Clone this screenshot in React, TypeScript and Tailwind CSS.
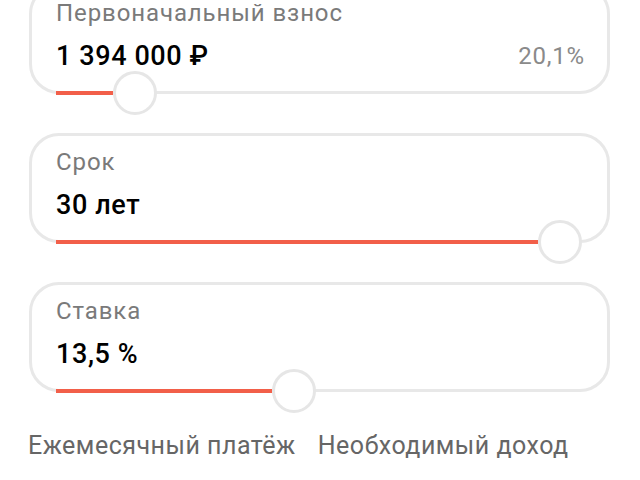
import React from 'react';

interface SliderCardProps {
  label: string;
  value: string;
  extra?: string;
  position: number; // 0..1
}

const TRACK_LEFT = 27;
const KNOB = 44;
const TRACK_WIDTH = 526;

const SliderCard: React.FC<SliderCardProps> = ({ label, value, extra, position }) => {
  const knobCenter = TRACK_LEFT + KNOB / 2 + position * (TRACK_WIDTH - KNOB);
  return (
    <div className="relative h-[110px] rounded-[30px] border-[3px] border-[#e8e8e8] bg-white pl-[24px] pr-[22px] pt-[12px]">
      <div className="text-[24px] leading-[28px] tracking-[0.9px] text-[#7a7a7a]">{label}</div>
      <div className="mt-[12px] flex items-center justify-between">
        <span className="text-[27px] leading-[34px] font-medium tracking-[0.6px] text-black">{value}</span>
        {extra && <span className="text-[24px] leading-[34px] tracking-[0.8px] text-[#8a8a8a]">{extra}</span>}
      </div>

      {/* slider over the bottom border */}
      <div
        className="absolute bottom-[-3.5px] h-[4px] bg-[#f25f49]"
        style={{ left: TRACK_LEFT - 3, width: knobCenter - KNOB / 2 - TRACK_LEFT }}
      />
      <div
        className="absolute bottom-[-23.5px] h-[44px] w-[44px] rounded-full border-[3px] border-[#e6e6e6] bg-white"
        style={{ left: knobCenter - KNOB / 2 - 3 }}
      />
    </div>
  );
};

export default function App() {
  return (
    <div className="h-[480px] w-[640px] overflow-hidden bg-white font-['Roboto',sans-serif]">
      <div className="mt-[-16px] flex flex-col gap-[39px] pl-[29px] pr-[30px]">
        <SliderCard label="Первоначальный взнос" value="1 394 000 ₽" extra="20,1%" position={0.118} />
        <SliderCard label="Срок" value="30 лет" position={1} />
        <SliderCard label="Ставка" value="13,5 %" position={0.448} />
      </div>
      <div className="mt-[38px] flex gap-[22px] pl-[28px] text-[25px] leading-[32px] tracking-[0.5px] text-[#666]">
        <span>Ежемесячный платёж</span>
        <span>Необходимый доход</span>
      </div>
    </div>
  );
}
